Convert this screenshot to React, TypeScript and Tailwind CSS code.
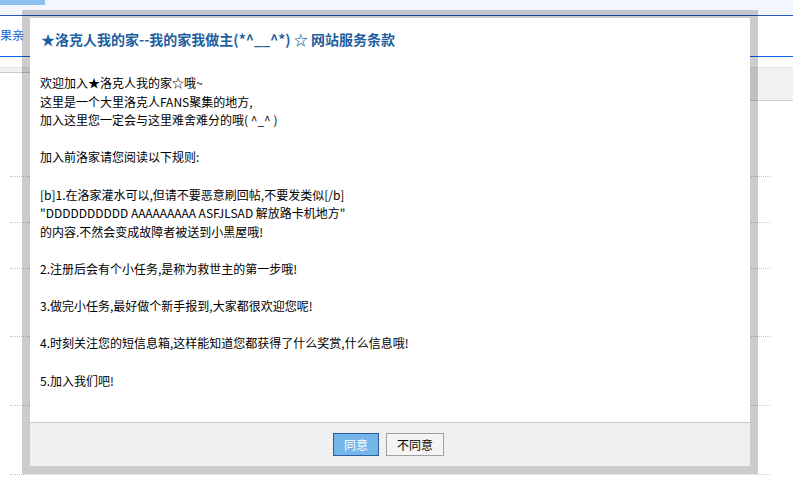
const cjk = { fontFamily: '"Noto Sans CJK SC", "Liberation Sans", sans-serif' };

export default function App() {
  return (
    <main className="relative h-[482px] w-full overflow-hidden bg-white" style={cjk}>
      {/* page behind the dialog */}
      <div className="h-[15px] bg-[#f3f7fd]">
        <div className="h-[5px] w-[45px] bg-[#8cc0ee]" />
      </div>
      <div className="h-px bg-[#2458c0]" />
      <div className="flex h-[40px] items-center text-[12px] text-[#1a5fd0]">
        <span className="-mt-[2px]">果亲</span>
      </div>
      <div className="h-px bg-[#0a66e8]" />
      <div className="h-[10px]" />
      <div className="flex h-[34px] items-start">
        <div className="w-[30px] border-y border-t-[#dde6ef] border-b-[#c8c8c8] bg-[#f1f1f1]">
          <div className="h-[4px]" />
        </div>
        <div className="flex-1 border-y border-t-[#dde6ef] border-b-[#cccccc] bg-[#f1f1f1]">
          <div className="h-[32px]" />
        </div>
      </div>

      <div className="ml-[10px] w-[760px]">
        <div className="h-[76px] border-b border-dotted border-[#c4c4c4]" />
        <div className="h-[46px] border-b border-dotted border-[#c4c4c4]" />
        <div className="h-[46px] border-b border-dotted border-[#c4c4c4]" />
        <div className="h-[68px] border-b border-dotted border-[#c4c4c4]" />
        <div className="h-[69px] border-b border-dotted border-[#c4c4c4]" />
        <div className="h-[69px] border-b border-dotted border-[#c4c4c4]" />
      </div>

      {/* dialog */}
      <div className="absolute left-[22px] top-[10px] h-[464px] w-[736px] bg-black/20 p-[8px]">
        <div className="flex h-full flex-col bg-white">
          <div className="h-[44px] pl-[11px] pt-[12px] text-[14px] font-bold leading-[18px] text-[#1d5f9f]">
            ★洛克人我的家--我的家我做主(*^__^*) ☆ 网站服务条款
          </div>

          <div className="flex-1 pl-[10px] pt-[12px] text-[12px] leading-[18.6px] text-black">
            欢迎加入★洛克人我的家☆哦~
            <br />
            这里是一个大里洛克人FANS聚集的地方,
            <br />
            加入这里您一定会与这里难舍难分的哦( ^_^ )
            <br />
            <br />
            加入前洛家请您阅读以下规则:
            <br />
            <br />
            [b]1.在洛家灌水可以,但请不要恶意刷回帖,不要发类似[/b]
            <br />
            "DDDDDDDDDD AAAAAAAAA ASFJLSAD 解放路卡机地方"
            <br />
            的内容.不然会变成故障者被送到小黑屋哦!
            <br />
            <br />
            2.注册后会有个小任务,是称为救世主的第一步哦!
            <br />
            <br />
            3.做完小任务,最好做个新手报到,大家都很欢迎您呢!
            <br />
            <br />
            4.时刻关注您的短信息箱,这样能知道您都获得了什么奖赏,什么信息哦!
            <br />
            <br />
            5.加入我们吧!
          </div>

          <div className="flex h-[44px] items-center justify-center gap-[7px] border-t border-[#c8c8c8] bg-[#f0f0f0] pr-[3px]">
            <button className="h-[23px] w-[46px] border border-[#2b5e9c] bg-[#74b6ea] text-[12px] leading-none text-white">
              同意
            </button>
            <button className="h-[23px] w-[58px] border border-[#a0a0a0] bg-[#f4f4f4] text-[12px] leading-none text-black">
              不同意
            </button>
          </div>
        </div>
      </div>
    </main>
  );
}
